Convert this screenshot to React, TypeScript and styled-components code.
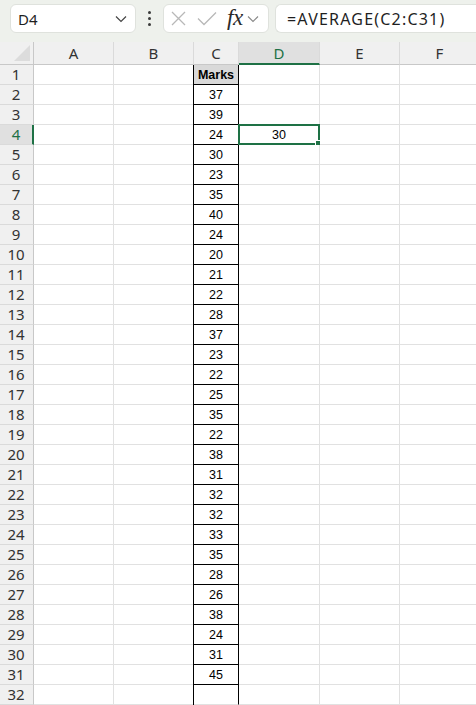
import React from "react";
import styled, { createGlobalStyle, css } from "styled-components";

const GlobalStyle = createGlobalStyle`
  html, body { margin: 0; padding: 0; background: #ffffff; overflow: hidden; }
  * { box-sizing: border-box; }
`;

const GREEN = "#1e7145";

const Page = styled.div`
  width: 476px;
  height: 705px;
  overflow: hidden;
  display: flex;
  flex-direction: column;
  background: #fff;
`;

const Toolbar = styled.div`
  height: 42px;
  flex: none;
  background: #eef1ec;
  display: flex;
  align-items: flex-start;
  padding: 4px 0 0 10px;
  font-family: "Noto Sans", "Open Sans", sans-serif;
  color: #1f1f1f;
`;

const Box = styled.div<{ $w?: number; $grow?: boolean }>`
  height: 29px;
  background: #ffffff;
  border: 1px solid #dfe2dd;
  border-radius: 6px;
  display: flex;
  align-items: center;
  ${(p) => (p.$w ? `width: ${p.$w}px;` : "")}
  ${(p) =>
    p.$grow
      ? css`
          flex: 1;
          border-right: none;
          border-radius: 6px 0 0 6px;
        `
      : ""}
`;

const NameText = styled.span`
  flex: 1;
  padding-left: 7px;
  font-size: 15px;
  color: #1f1f1f;
`;

const Chevron = styled.svg`
  flex: none;
`;

const Dots = styled.div`
  width: 27px;
  height: 29px;
  display: flex;
  flex-direction: column;
  align-items: center;
  justify-content: center;
  gap: 3px;
  span {
    width: 3px;
    height: 3px;
    border-radius: 50%;
    background: #3a3a3a;
  }
`;

const FuncBox = styled(Box)`
  gap: 0;
  padding-left: 6px;
`;

const Gap = styled.div<{ $w: number }>`
  width: ${(p) => p.$w}px;
  flex: none;
`;

const Fx = styled.span`
  font-family: "Liberation Serif", "DejaVu Serif", serif;
  font-style: italic;
  font-size: 23px;
  color: #2a2a2a;
  line-height: 1;
  margin-top: -3px;
  letter-spacing: -0.5px;
`;

const FormulaText = styled.span`
  padding-left: 11px;
  font-size: 16px;
  letter-spacing: 1.2px;
  color: #1f1f1f;
`;

const Sheet = styled.div`
  display: grid;
  grid-template-columns: 34px 80px 80px 45px 81px 80px 80px;
  grid-template-rows: 23px repeat(32, 20px);
  flex: none;
`;

const Corner = styled.div`
  background: #f0f0f0;
  border-right: 1px solid #c8c8c8;
  border-bottom: 1px solid #c8c8c8;
  position: relative;
  &::after {
    content: "";
    position: absolute;
    right: 3px;
    bottom: 3px;
    width: 0;
    height: 0;
    border-left: 16px solid transparent;
    border-bottom: 16px solid #dcdcdc;
  }
`;

const ColHead = styled.div<{ $active?: boolean }>`
  background: ${(p) => (p.$active ? "#e0e0e0" : "#f0f0f0")};
  border-right: 1px solid #dadada;
  border-bottom: ${(p) => (p.$active ? `2px solid ${GREEN}` : "1px solid #c8c8c8")};
  color: ${(p) => (p.$active ? GREEN : "#333")};
  font-family: "Noto Sans", "Open Sans", sans-serif;
  font-size: 15px;
  display: flex;
  align-items: center;
  justify-content: center;
  padding-top: ${(p) => (p.$active ? "1px" : "0")};
`;

const RowHead = styled.div<{ $active?: boolean }>`
  background: ${(p) => (p.$active ? "#e0e0e0" : "#f0f0f0")};
  border-right: ${(p) => (p.$active ? `2px solid ${GREEN}` : "1px solid #c8c8c8")};
  border-bottom: 1px solid #dadada;
  color: ${(p) => (p.$active ? GREEN : "#333")};
  font-family: "Noto Sans", "Open Sans", sans-serif;
  font-size: 15px;
  line-height: 1;
  display: flex;
  align-items: center;
  justify-content: center;
  padding-right: ${(p) => (p.$active ? "0" : "1px")};
`;

const Cell = styled.div<{ $boxed?: boolean; $closed?: boolean; $header?: boolean; $selected?: boolean }>`
  position: relative;
  border-right: 1px solid ${(p) => (p.$boxed ? "#000" : "#e1e1e1")};
  border-bottom: 1px solid ${(p) => (p.$closed ? "#000" : "#e1e1e1")};
  background: ${(p) => (p.$header ? "#d9d9d9" : "#fff")};
  font-family: "Liberation Sans", Arial, sans-serif;
  font-size: 12.5px;
  font-weight: ${(p) => (p.$header ? 700 : 400)};
  color: #000;
  display: flex;
  align-items: center;
  justify-content: center;
  padding-top: 1px;
  ${(p) =>
    p.$boxed &&
    css`
      box-shadow: -1px 0 0 #000;
    `}
  ${(p) =>
    p.$selected &&
    css`
      &::before {
        content: "";
        position: absolute;
        left: -1px;
        top: -1px;
        right: -1px;
        bottom: -1px;
        border: 2px solid ${GREEN};
        pointer-events: none;
      }
      &::after {
        content: "";
        position: absolute;
        right: -3px;
        bottom: -3px;
        width: 5px;
        height: 5px;
        background: ${GREEN};
        border: 1px solid #fff;
      }
    `}
`;

const marks = [37, 39, 24, 30, 23, 35, 40, 24, 20, 21, 22, 28, 37, 23, 22, 25, 35, 22, 38, 31, 32, 32, 33, 35, 28, 26, 38, 24, 31, 45];
const cols = ["A", "B", "C", "D", "E", "F"];

const ChevronIcon = () => (
  <Chevron width="12" height="8" viewBox="0 0 12 8">
    <path d="M1 1.5 L6 6.5 L11 1.5" fill="none" stroke="#444" strokeWidth="1.2" />
  </Chevron>
);

const FaintChevron = () => (
  <Chevron width="12" height="8" viewBox="0 0 12 8">
    <path d="M1 1.5 L6 6.5 L11 1.5" fill="none" stroke="#888" strokeWidth="1.1" />
  </Chevron>
);

export default function App() {
  const rows = Array.from({ length: 32 }, (_, i) => i + 1);
  return (
    <Page>
      <GlobalStyle />
      <Toolbar>
        <Box $w={126}>
          <NameText>D4</NameText>
          <ChevronIcon />
          <Gap $w={8} />
        </Box>
        <Dots>
          <span />
          <span />
          <span />
        </Dots>
        <FuncBox $w={106}>
          <svg width="17" height="17" viewBox="0 0 17 17">
            <path d="M2 2 L15 15 M15 2 L2 15" stroke="#b8b8b8" strokeWidth="1.3" fill="none" />
          </svg>
          <Gap $w={10} />
          <svg width="20" height="15" viewBox="0 0 20 15">
            <path d="M1 7.5 L7 13.5 L19 1.5" stroke="#b8b8b8" strokeWidth="1.3" fill="none" />
          </svg>
          <Gap $w={10} />
          <Fx>fx</Fx>
          <Gap $w={4} />
          <FaintChevron />
        </FuncBox>
        <Gap $w={6} />
        <Box $grow>
          <FormulaText>=AVERAGE(C2:C31)</FormulaText>
        </Box>
      </Toolbar>
      <Sheet>
        <Corner />
        {cols.map((c) => (
          <ColHead key={c} $active={c === "D"}>
            {c}
          </ColHead>
        ))}
        {rows.map((r) => (
          <React.Fragment key={r}>
            <RowHead $active={r === 4}>{r}</RowHead>
            {cols.map((c) => {
              if (c === "C") {
                const text = r === 1 ? "Marks" : r <= 31 ? String(marks[r - 2]) : "";
                return (
                  <Cell key={c} $boxed $closed={r <= 31} $header={r === 1}>
                    {text}
                  </Cell>
                );
              }
              if (c === "D" && r === 4) {
                return (
                  <Cell key={c} $selected>
                    30
                  </Cell>
                );
              }
              return <Cell key={c} />;
            })}
          </React.Fragment>
        ))}
      </Sheet>
    </Page>
  );
}
